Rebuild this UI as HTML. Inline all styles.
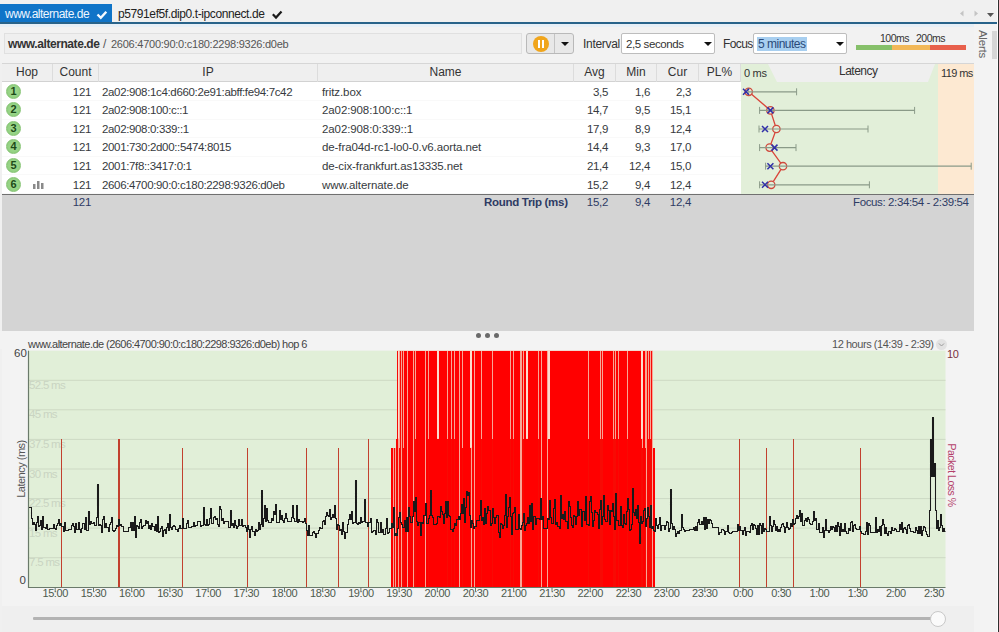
<!DOCTYPE html>
<html><head><meta charset="utf-8">
<style>
*{box-sizing:border-box;margin:0;padding:0}
html,body{width:999px;height:632px;overflow:hidden;background:#f0f0f0;font-family:"Liberation Sans",sans-serif;font-size:11px;color:#333}
.abs{position:absolute}
#tabs{position:absolute;left:0;top:0;width:999px;height:23px;background:#f0f0f0}
#tab1{position:absolute;left:0;top:4px;width:112px;height:19px;background:#0f74c8;color:#fff;font-size:12px;line-height:19px;padding-left:5px;letter-spacing:-0.2px}
#tab2{position:absolute;left:118px;top:4px;height:19px;color:#222;font-size:12px;line-height:19px;letter-spacing:-0.2px}
#bline{position:absolute;left:0;top:22px;width:998px;height:2px;background:#28638a}
#tool{position:absolute;left:0;top:24px;width:974px;height:39px;background:#f2f2f2}
#addr{position:absolute;left:4px;top:33px;width:518px;height:21px;border:1px solid #e0e0e0;background:#efefef;line-height:19px;padding-left:4px;font-size:12px;color:#444;letter-spacing:-0.3px}
#addr b{color:#333}
#pause{position:absolute;left:526px;top:33px;width:48px;height:21px;border:1px solid #b9b9b9;border-radius:3px;background:#e8e8e8}
#pause .div{position:absolute;left:27px;top:0;width:1px;height:19px;background:#c4c4c4}
#pause .circ{position:absolute;left:6px;top:2px;width:16px;height:16px;border-radius:50%;background:#f0a51c}
#pause .circ:before,#pause .circ:after{content:"";position:absolute;top:4px;width:2px;height:8px;background:#fff}
#pause .circ:before{left:5px}#pause .circ:after{left:9px}
.tri{position:absolute;width:0;height:0;border-left:4px solid transparent;border-right:4px solid transparent;border-top:4px solid #111}
.lbl{position:absolute;font-size:12px;color:#333;letter-spacing:-0.2px}
.sel{position:absolute;height:21px;border:1px solid #bdbdbd;border-radius:2px;background:#fff;font-size:12px;line-height:19px;padding-left:3px;color:#333}
#focussel span{background:#a8cff0;color:#2a4a7a;padding:0 1px}
#sidebar{position:absolute;left:974px;top:24px;width:25px;height:608px;background:#f3f3f3}
#alerts{position:absolute;left:969px;top:38px;transform:rotate(90deg);font-size:11.5px;color:#666;transform-origin:center;letter-spacing:-0.2px}
#table{position:absolute;left:2px;top:63px;width:972px;height:268px;background:#d4d4d4}
#thead{position:absolute;left:0;top:0;width:972px;height:19px;background:#efefef;border-top:1px solid #d6d6d6;border-bottom:1px solid #d2d2d2}
.th{position:absolute;top:0;height:18px;line-height:17px;text-align:center;font-size:12px;color:#333;border-right:1px solid #dcdcdc}
#rowsbg{position:absolute;left:0;top:19px;width:739px;height:112px;background:#fff}
.row{position:absolute;left:0;width:739px;height:18.6px;border-bottom:1px solid #f9f9f9}
.hop{position:absolute;left:4px;top:1px;width:15px;height:15px;border-radius:50%;background:radial-gradient(circle,#a2da92 0%,#94d283 60%,#7fc26d 100%);border:1px solid #86c474;font-size:11px;line-height:13px;text-align:center;color:#1c4a18;font-weight:bold}
.bars{position:absolute;left:31px;top:4.5px;fill:#8a8a8a}
.c{position:absolute;top:0;line-height:18.6px;font-size:11.5px;color:#363a40;white-space:nowrap;letter-spacing:-0.35px}
.cnt{left:0;width:89px;text-align:right}
.ip{left:100px}
.nm{left:320px;letter-spacing:-0.1px}
.avg{left:554px;width:52px;text-align:right}
.min{left:600px;width:48px;text-align:right}
.cur{left:640px;width:49px;text-align:right}
#botline{position:absolute;left:0;top:130px;width:972px;height:1.5px;background:#707070}
.rt{position:absolute;top:131px;line-height:16px;font-size:11.5px;color:#2e3b64;letter-spacing:-0.3px}
#divbar{position:absolute;left:0;top:331px;width:974px;height:18px;background:#f3f3f3}
.dot{position:absolute;top:333px;width:5px;height:5px;border-radius:50%;background:#6a6a6a}
#chartp{position:absolute;left:2px;top:338px;width:972px;height:268px;background:#f3f3f3}
#slidep{position:absolute;left:2px;top:606px;width:972px;height:26px;background:#efefef}
.glab{position:absolute;left:29px;font-size:11.5px;color:#c9d4c2;letter-spacing:-0.7px}
.tlab{position:absolute;top:586px;width:60px;text-align:center;font-size:11px;color:#4d5a4d;letter-spacing:-0.4px;line-height:14px}
</style></head><body>
<div id="tabs"></div>
<div id="tab1"></div>
<div class="abs" style="left:5px;top:6px;font-size:12px;line-height:16px;color:#eef6ff;letter-spacing:-0.5px">www.alternate.de</div>
<div class="abs" style="left:118px;top:6px;font-size:12px;line-height:16px;color:#222;letter-spacing:-0.4px">p5791ef5f.dip0.t-ipconnect.de</div>
<svg class="abs" style="left:0;top:0" width="300" height="24"><path d="M97.5,14.5 L100.8,17.8 L106.3,11.8" fill="none" stroke="#f4faff" stroke-width="2.4"/><path d="M272.8,14.3 L276,17.6 L281.5,11.5" fill="none" stroke="#1a1a1a" stroke-width="2.2"/></svg>
<svg class="abs" style="left:955px;top:8px" width="44" height="12"><path d="M5,5.5 L8.5,2.5 L8.5,8.5Z" fill="#c4c4c4"/><path d="M19.5,2.5 L23,5.5 L19.5,8.5Z" fill="#c4c4c4"/><path d="M32,5 L39,5 L35.5,9Z" fill="#555"/></svg>
<div id="bline"></div>
<div id="tool"></div><div class="abs" style="left:0;top:24px;width:997px;height:3px;background:#e6eff7"></div>
<div id="addr"></div>
<div class="abs" style="left:8px;top:36px;font-size:12px;line-height:16px;font-weight:bold;color:#333;letter-spacing:-0.42px">www.alternate.de</div>
<div class="abs" style="left:103px;top:36px;font-size:12px;line-height:16px;color:#555">/</div>
<div class="abs" style="left:111px;top:36px;font-size:11px;line-height:16px;color:#555;letter-spacing:-0.25px">2606:4700:90:0:c180:2298:9326:d0eb</div>
<div id="pause"><div class="circ"></div><div class="div"></div><div class="tri" style="left:34px;top:8px"></div></div>
<div class="lbl" style="left:583px;top:37px;letter-spacing:-0.3px">Interval</div>
<div class="sel" style="left:621px;top:33px;width:94px;padding-left:4px;line-height:21px;font-size:11.5px;letter-spacing:-0.4px">2,5 seconds<div class="tri" style="left:82px;top:8px"></div></div>
<div class="lbl" style="left:723px;top:37px;letter-spacing:-0.6px">Focus</div>
<div class="sel" id="focussel" style="left:753px;top:33px;width:94px;line-height:21px;letter-spacing:-0.5px"><span>5 minutes</span><div class="tri" style="left:82px;top:8px"></div></div>
<div class="lbl" style="left:880px;top:32px;font-size:10.5px;letter-spacing:-0.5px">100ms</div>
<div class="lbl" style="left:916px;top:32px;font-size:10.5px;letter-spacing:-0.5px">200ms</div>
<div class="abs" style="left:856px;top:45px;width:36px;height:5px;background:#86c06a"></div>
<div class="abs" style="left:892px;top:45px;width:38px;height:5px;background:#f2b858"></div>
<div class="abs" style="left:930px;top:45px;width:36px;height:5px;background:#e8604c"></div>
<div id="sidebar"></div>
<div class="abs" style="left:992px;top:31px;width:5px;height:28px;background:#d6d6d6"></div>
<div class="abs" style="left:997px;top:0;width:1px;height:632px;background:#fcfcfc"></div><div class="abs" style="left:998px;top:0;width:1px;height:632px;background:#2e2e2e"></div>
<div id="alerts">Alerts</div>

<div id="table">
 <div id="thead">
  <div class="th" style="left:0;width:51px">Hop</div>
  <div class="th" style="left:51px;width:46px">Count</div>
  <div class="th" style="left:97px;width:219px">IP</div>
  <div class="th" style="left:316px;width:256px">Name</div>
  <div class="th" style="left:572px;width:42px">Avg</div>
  <div class="th" style="left:614px;width:41px">Min</div>
  <div class="th" style="left:655px;width:42px">Cur</div>
  <div class="th" style="left:697px;width:42px">PL%</div>
 </div>
 <div id="rowsbg"></div>
</div>
<div style="position:absolute;left:2px;top:0;">
<div class="row" style="top:82.5px"><div class="hop">1</div><div class="c cnt">121</div><div class="c ip">2a02:908:1c4:d660:2e91:abff:fe94:7c42</div><div class="c nm">fritz.box</div><div class="c avg">3,5</div><div class="c min">1,6</div><div class="c cur">2,3</div></div><div class="row" style="top:101.1px"><div class="hop">2</div><div class="c cnt">121</div><div class="c ip">2a02:908:100:c::1</div><div class="c nm">2a02:908:100:c::1</div><div class="c avg">14,7</div><div class="c min">9,5</div><div class="c cur">15,1</div></div><div class="row" style="top:119.7px"><div class="hop">3</div><div class="c cnt">121</div><div class="c ip">2a02:908:0:339::1</div><div class="c nm">2a02:908:0:339::1</div><div class="c avg">17,9</div><div class="c min">8,9</div><div class="c cur">12,4</div></div><div class="row" style="top:138.3px"><div class="hop">4</div><div class="c cnt">121</div><div class="c ip">2001:730:2d00::5474:8015</div><div class="c nm">de-fra04d-rc1-lo0-0.v6.aorta.net</div><div class="c avg">14,4</div><div class="c min">9,3</div><div class="c cur">17,0</div></div><div class="row" style="top:156.9px"><div class="hop">5</div><div class="c cnt">121</div><div class="c ip">2001:7f8::3417:0:1</div><div class="c nm">de-cix-frankfurt.as13335.net</div><div class="c avg">21,4</div><div class="c min">12,4</div><div class="c cur">15,0</div></div><div class="row" style="top:175.5px"><div class="hop">6</div><svg class="bars" width="12" height="9" viewBox="0 0 12 9"><rect x="0" y="4" width="2.5" height="5"/><rect x="4" y="1" width="2.5" height="8"/><rect x="8" y="3" width="2.5" height="6"/></svg><div class="c cnt">121</div><div class="c ip">2606:4700:90:0:c180:2298:9326:d0eb</div><div class="c nm">www.alternate.de</div><div class="c avg">15,2</div><div class="c min">9,4</div><div class="c cur">12,4</div></div>
</div>
<div class="abs" style="left:741px;top:64px;width:197px;height:130px;background:#e2efd9"></div>
<div class="abs" style="left:938px;top:64px;width:36px;height:130px;background:#fde9d2"></div>
<svg class="abs" style="left:0;top:0" width="999" height="632"><polygon points="768,64 935,64 928,82 777,82" fill="#efefef"/></svg>
<div class="abs" style="left:744px;top:67px;font-size:11px;color:#333;letter-spacing:-0.3px">0 ms</div>
<div class="abs" style="left:839px;top:64px;font-size:12px;color:#333;letter-spacing:-0.5px">Latency</div>
<div class="abs" style="left:941px;top:67px;font-size:11px;color:#333;letter-spacing:-0.6px">119 ms</div>
<svg class="abs" style="left:0;top:0" width="999" height="632"><polyline points="748.7,91.8 770.4,110.4 776.4,129.0 769.6,147.6 783.0,166.2 771.2,184.8" fill="none" stroke="#d9453a" stroke-width="1.3"/><circle cx="748.7" cy="91.8" r="3.7" fill="#e2efd9" stroke="#d0483c" stroke-width="1.3"/><circle cx="770.4" cy="110.4" r="3.7" fill="#e2efd9" stroke="#d0483c" stroke-width="1.3"/><circle cx="776.4" cy="129.0" r="3.7" fill="#e2efd9" stroke="#d0483c" stroke-width="1.3"/><circle cx="769.6" cy="147.6" r="3.7" fill="#e2efd9" stroke="#d0483c" stroke-width="1.3"/><circle cx="783.0" cy="166.2" r="3.7" fill="#e2efd9" stroke="#d0483c" stroke-width="1.3"/><circle cx="771.2" cy="184.8" r="3.7" fill="#e2efd9" stroke="#d0483c" stroke-width="1.3"/><line x1="748.0" y1="91.8" x2="796.6" y2="91.8" stroke="#8a9a88" stroke-width="1.2"/><line x1="748.0" y1="88.3" x2="748.0" y2="95.3" stroke="#8a9a88" stroke-width="1"/><line x1="796.6" y1="88.3" x2="796.6" y2="95.3" stroke="#8a9a88" stroke-width="1"/><line x1="759.6" y1="110.4" x2="914.6" y2="110.4" stroke="#8a9a88" stroke-width="1.2"/><line x1="759.6" y1="106.9" x2="759.6" y2="113.9" stroke="#8a9a88" stroke-width="1"/><line x1="914.6" y1="106.9" x2="914.6" y2="113.9" stroke="#8a9a88" stroke-width="1"/><line x1="759.0" y1="129.0" x2="868.0" y2="129.0" stroke="#8a9a88" stroke-width="1.2"/><line x1="759.0" y1="125.5" x2="759.0" y2="132.5" stroke="#8a9a88" stroke-width="1"/><line x1="868.0" y1="125.5" x2="868.0" y2="132.5" stroke="#8a9a88" stroke-width="1"/><line x1="759.6" y1="147.6" x2="796.0" y2="147.6" stroke="#8a9a88" stroke-width="1.2"/><line x1="759.6" y1="144.1" x2="759.6" y2="151.1" stroke="#8a9a88" stroke-width="1"/><line x1="796.0" y1="144.1" x2="796.0" y2="151.1" stroke="#8a9a88" stroke-width="1"/><line x1="765.6" y1="166.2" x2="971.2" y2="166.2" stroke="#8a9a88" stroke-width="1.2"/><line x1="765.6" y1="162.7" x2="765.6" y2="169.7" stroke="#8a9a88" stroke-width="1"/><line x1="971.2" y1="162.7" x2="971.2" y2="169.7" stroke="#8a9a88" stroke-width="1"/><line x1="759.6" y1="184.8" x2="869.4" y2="184.8" stroke="#8a9a88" stroke-width="1.2"/><line x1="759.6" y1="181.3" x2="759.6" y2="188.3" stroke="#8a9a88" stroke-width="1"/><line x1="869.4" y1="181.3" x2="869.4" y2="188.3" stroke="#8a9a88" stroke-width="1"/><path d="M743.0,88.8 l6,6 m0,-6 l-6,6" stroke="#3030a8" stroke-width="1.5" fill="none"/><path d="M767.4,107.4 l6,6 m0,-6 l-6,6" stroke="#3030a8" stroke-width="1.5" fill="none"/><path d="M762.0,126.0 l6,6 m0,-6 l-6,6" stroke="#3030a8" stroke-width="1.5" fill="none"/><path d="M771.5,144.6 l6,6 m0,-6 l-6,6" stroke="#3030a8" stroke-width="1.5" fill="none"/><path d="M767.4,163.2 l6,6 m0,-6 l-6,6" stroke="#3030a8" stroke-width="1.5" fill="none"/><path d="M762.0,181.8 l6,6 m0,-6 l-6,6" stroke="#3030a8" stroke-width="1.5" fill="none"/></svg>
<div id="botline" style="left:2px;top:193.5px"></div>
<div class="rt" style="left:2px;width:89px;text-align:right;top:194px;color:#2e3b64">121</div>
<div class="rt" style="left:484px;top:194px;font-weight:bold">Round Trip (ms)</div>
<div class="rt" style="left:556px;top:194px;width:52px;text-align:right">15,2</div>
<div class="rt" style="left:602px;top:194px;width:48px;text-align:right">9,4</div>
<div class="rt" style="left:642px;top:194px;width:49px;text-align:right">12,4</div>
<div class="rt" style="left:853px;top:194px;font-size:11.5px;letter-spacing:-0.38px">Focus: 2:34:54 - 2:39:54</div>

<div id="divbar"></div>
<div class="dot" style="left:476px"></div><div class="dot" style="left:485px"></div><div class="dot" style="left:494px"></div>
<div id="chartp"></div>
<div id="slidep"></div>
<div class="abs" style="left:28px;top:338px;font-size:11px;color:#444;letter-spacing:-0.55px">www.alternate.de (2606:4700:90:0:c180:2298:9326:d0eb) hop 6</div>
<div class="abs" style="left:935.5px;top:339px;width:11px;height:11px;border-radius:50%;background:#e2e2e2"><svg width="11" height="11" style="position:absolute;left:0;top:0"><path d="M3,4.5 L5.5,7 L8,4.5" fill="none" stroke="#9a9a9a" stroke-width="1"/></svg></div>
<div class="abs" style="left:832px;top:338px;font-size:11px;color:#555;letter-spacing:-0.45px">12 hours (14:39 - 2:39)</div>
<div class="abs" style="left:14px;top:347px;font-size:11.5px;color:#444">60</div>
<div class="abs" style="left:19.5px;top:574px;font-size:11.5px;color:#444">0</div>
<div class="abs" style="left:947px;top:348px;font-size:11px;color:#7a3040;letter-spacing:-0.3px">10</div>
<div class="abs" style="left:-8px;top:463px;transform:rotate(-90deg);font-size:11px;color:#555;letter-spacing:-0.5px">Latency (ms)</div>
<div class="abs" style="left:921px;top:469px;transform:rotate(90deg);font-size:10.5px;color:#b4406a;letter-spacing:-0.5px">Packet Loss %</div>
<svg class="abs" style="left:0;top:0" width="999" height="632">
 <rect x="28.5" y="350.7" width="917" height="236.6" fill="#e1efd8"/>
 <g stroke="#cdd9c4" stroke-width="1"><line x1="28.5" y1="380.3" x2="945.5" y2="380.3"/><line x1="28.5" y1="409.8" x2="945.5" y2="409.8"/><line x1="28.5" y1="439.4" x2="945.5" y2="439.4"/><line x1="28.5" y1="469.0" x2="945.5" y2="469.0"/><line x1="28.5" y1="498.6" x2="945.5" y2="498.6"/><line x1="28.5" y1="528.1" x2="945.5" y2="528.1"/><line x1="28.5" y1="557.7" x2="945.5" y2="557.7"/></g>
</svg>
<div class="glab" style="top:378.8px">52.5 ms</div><div class="glab" style="top:408.3px">45 ms</div><div class="glab" style="top:437.9px">37.5 ms</div><div class="glab" style="top:467.5px">30 ms</div><div class="glab" style="top:497.1px">22.5 ms</div><div class="glab" style="top:526.6px">15 ms</div><div class="glab" style="top:556.2px">7.5 ms</div>
<svg class="abs" style="left:0;top:0" width="999" height="632">
 <rect x="397" y="350.7" width="256" height="236.6" fill="#f8a595"/><rect x="391" y="448" width="264" height="139.3" fill="#f8a595"/><g fill="#fbdccd"><rect x="437" y="350.7" width="2" height="88"/><rect x="470" y="350.7" width="2" height="97"/><rect x="526" y="350.7" width="2" height="88"/><rect x="548" y="350.7" width="2" height="236"/><rect x="641" y="350.7" width="2" height="88"/><rect x="398" y="350.7" width="1" height="88"/></g>
 <g fill="#ff0000" shape-rendering="crispEdges"><rect x="61" y="438.5" width="1" height="148.8" fill="#c2402e"/><rect x="118" y="438.5" width="2" height="148.8" fill="#c2402e"/><rect x="182" y="448.0" width="1" height="139.3" fill="#c2402e"/><rect x="247" y="448.0" width="1" height="139.3" fill="#c2402e"/><rect x="306" y="448.0" width="1" height="139.3" fill="#c2402e"/><rect x="338" y="448.0" width="1" height="139.3" fill="#c2402e"/><rect x="368" y="438.5" width="1" height="148.8" fill="#c2402e"/><rect x="391" y="448.0" width="2" height="139.3" fill="#ff0000"/><rect x="394" y="448.0" width="1" height="139.3" fill="#f80a04"/><rect x="396" y="438.5" width="1" height="148.8" fill="#f80a04"/><rect x="397" y="350.7" width="1" height="236.6" fill="#f80a04"/><rect x="399" y="448.0" width="1" height="139.3" fill="#f80a04"/><rect x="400" y="350.7" width="1" height="236.6" fill="#f80a04"/><rect x="402" y="350.7" width="1" height="236.6" fill="#f80a04"/><rect x="403" y="448.0" width="1" height="139.3" fill="#f80a04"/><rect x="404" y="350.7" width="3" height="236.6" fill="#ff0000"/><rect x="408" y="350.7" width="5" height="236.6" fill="#ff0000"/><rect x="414" y="350.7" width="1" height="236.6" fill="#f80a04"/><rect x="415" y="438.5" width="1" height="148.8" fill="#f80a04"/><rect x="416" y="350.7" width="9" height="236.6" fill="#ff0000"/><rect x="426" y="350.7" width="2" height="236.6" fill="#ff0000"/><rect x="428" y="438.5" width="1" height="148.8" fill="#f80a04"/><rect x="429" y="350.7" width="8" height="236.6" fill="#ff0000"/><rect x="437" y="438.5" width="2" height="148.8" fill="#ff0000"/><rect x="439" y="350.7" width="8" height="236.6" fill="#ff0000"/><rect x="447" y="438.5" width="1" height="148.8" fill="#f80a04"/><rect x="448" y="350.7" width="3" height="236.6" fill="#ff0000"/><rect x="451" y="438.5" width="1" height="148.8" fill="#f80a04"/><rect x="452" y="350.7" width="2" height="236.6" fill="#ff0000"/><rect x="454" y="438.5" width="1" height="148.8" fill="#f80a04"/><rect x="455" y="350.7" width="4" height="236.6" fill="#ff0000"/><rect x="460" y="350.7" width="2" height="236.6" fill="#ff0000"/><rect x="462" y="448.0" width="1" height="139.3" fill="#f80a04"/><rect x="463" y="350.7" width="7" height="236.6" fill="#ff0000"/><rect x="470" y="448.0" width="1" height="139.3" fill="#f80a04"/><rect x="472" y="350.7" width="2" height="236.6" fill="#ff0000"/><rect x="475" y="350.7" width="6" height="236.6" fill="#ff0000"/><rect x="481" y="438.5" width="1" height="148.8" fill="#f80a04"/><rect x="482" y="350.7" width="10" height="236.6" fill="#ff0000"/><rect x="492" y="438.5" width="1" height="148.8" fill="#f80a04"/><rect x="493" y="350.7" width="17" height="236.6" fill="#ff0000"/><rect x="510" y="438.5" width="1" height="148.8" fill="#f80a04"/><rect x="511" y="350.7" width="2" height="236.6" fill="#ff0000"/><rect x="513" y="438.5" width="1" height="148.8" fill="#f80a04"/><rect x="514" y="350.7" width="6" height="236.6" fill="#ff0000"/><rect x="522" y="350.7" width="1" height="236.6" fill="#f80a04"/><rect x="523" y="438.5" width="1" height="148.8" fill="#f80a04"/><rect x="524" y="350.7" width="2" height="236.6" fill="#ff0000"/><rect x="526" y="438.5" width="2" height="148.8" fill="#ff0000"/><rect x="528" y="350.7" width="10" height="236.6" fill="#ff0000"/><rect x="538" y="438.5" width="1" height="148.8" fill="#f80a04"/><rect x="539" y="350.7" width="2" height="236.6" fill="#ff0000"/><rect x="542" y="350.7" width="5" height="236.6" fill="#ff0000"/><rect x="548" y="438.5" width="2" height="148.8" fill="#ff0000"/><rect x="550" y="350.7" width="38" height="236.6" fill="#ff0000"/><rect x="588" y="438.5" width="1" height="148.8" fill="#f80a04"/><rect x="589" y="350.7" width="11" height="236.6" fill="#ff0000"/><rect x="600" y="438.5" width="1" height="148.8" fill="#f80a04"/><rect x="601" y="350.7" width="1" height="236.6" fill="#f80a04"/><rect x="602" y="438.5" width="1" height="148.8" fill="#f80a04"/><rect x="603" y="350.7" width="10" height="236.6" fill="#ff0000"/><rect x="613" y="438.5" width="1" height="148.8" fill="#f80a04"/><rect x="614" y="350.7" width="1" height="236.6" fill="#f80a04"/><rect x="615" y="438.5" width="1" height="148.8" fill="#f80a04"/><rect x="616" y="350.7" width="2" height="236.6" fill="#ff0000"/><rect x="618" y="438.5" width="1" height="148.8" fill="#f80a04"/><rect x="619" y="350.7" width="8" height="236.6" fill="#ff0000"/><rect x="627" y="438.5" width="1" height="148.8" fill="#f80a04"/><rect x="628" y="350.7" width="13" height="236.6" fill="#ff0000"/><rect x="641" y="438.5" width="1" height="148.8" fill="#f80a04"/><rect x="642" y="448.0" width="1" height="139.3" fill="#f80a04"/><rect x="643" y="350.7" width="2" height="236.6" fill="#ff0000"/><rect x="645" y="448.0" width="1" height="139.3" fill="#f80a04"/><rect x="647" y="350.7" width="1" height="236.6" fill="#f80a04"/><rect x="648" y="438.5" width="1" height="148.8" fill="#f80a04"/><rect x="649" y="350.7" width="1" height="236.6" fill="#f80a04"/><rect x="650" y="438.5" width="1" height="148.8" fill="#f80a04"/><rect x="651" y="350.7" width="1" height="236.6" fill="#f80a04"/><rect x="653" y="448.0" width="2" height="139.3" fill="#ff0000"/><rect x="739" y="438.5" width="1" height="148.8" fill="#c2402e"/><rect x="766" y="448.0" width="1" height="139.3" fill="#c2402e"/><rect x="793" y="438.5" width="1" height="148.8" fill="#c2402e"/><rect x="860" y="448.0" width="1" height="139.3" fill="#c2402e"/></g>
 <path d="M29,507.5 V507.5 H30.5 V507.5 H31.5 V518.5 H32.5 V524.5 H33.5 V522.5 H34.5 V524.5 H35.5 V530.5 H36.5 V522.5 H37.5 V516.5 H38.5 V526.5 H39.5 V525.5 H40.5 V520.5 H41.5 V529.5 H42.5 V516.5 H43.5 V527.5 H44.5 V527.5 H45.5 V528.5 H46.5 V524.5 H47.5 V529.5 H48.5 V529.5 H49.5 V528.5 H50.5 V528.5 H51.5 V528.5 H52.5 V528.5 H53.5 V524.5 H54.5 V528.5 H55.5 V529.5 H56.5 V525.5 H57.5 V523.5 H58.5 V519.5 H59.5 V525.5 H60.5 V523.5 H61.5 V526.5 H62.5 V526.5 H63.5 V531.5 H64.5 V522.5 H65.5 V530.5 H66.5 V530.5 H67.5 V530.5 H68.5 V529.5 H69.5 V529.5 H70.5 V529.5 H71.5 V525.5 H72.5 V523.5 H73.5 V526.5 H74.5 V532.5 H75.5 V523.5 H76.5 V529.5 H77.5 V529.5 H78.5 V522.5 H79.5 V529.5 H80.5 V532.5 H81.5 V528.5 H82.5 V523.5 H83.5 V523.5 H84.5 V529.5 H85.5 V517.5 H86.5 V530.5 H87.5 V530.5 H88.5 V511.5 H89.5 V524.5 H90.5 V521.5 H91.5 V523.5 H92.5 V523.5 H93.5 V522.5 H94.5 V525.5 H95.5 V525.5 H96.5 V517.5 H97.5 V484.5 H98.5 V525.5 H99.5 V524.5 H100.5 V525.5 H101.5 V532.5 H102.5 V519.5 H103.5 V516.5 H104.5 V527.5 H105.5 V523.5 H106.5 V527.5 H107.5 V527.5 H108.5 V531.5 H109.5 V524.5 H110.5 V522.5 H111.5 V517.5 H112.5 V530.5 H113.5 V531.5 H114.5 V530.5 H115.5 V528.5 H116.5 V525.5 H117.5 V526.5 H118.5 V519.5 H119.5 V525.5 H120.5 V524.5 H121.5 V526.5 H122.5 V526.5 H123.5 V531.5 H124.5 V531.5 H125.5 V531.5 H126.5 V531.5 H127.5 V531.5 H128.5 V527.5 H129.5 V527.5 H130.5 V522.5 H131.5 V530.5 H132.5 V522.5 H133.5 V530.5 H134.5 V516.5 H135.5 V537.5 H136.5 V525.5 H137.5 V526.5 H138.5 V528.5 H139.5 V522.5 H140.5 V519.5 H141.5 V528.5 H142.5 V526.5 H143.5 V525.5 H144.5 V525.5 H145.5 V520.5 H146.5 V523.5 H147.5 V521.5 H148.5 V528.5 H149.5 V525.5 H150.5 V529.5 H151.5 V523.5 H152.5 V526.5 H153.5 V526.5 H154.5 V530.5 H155.5 V524.5 H156.5 V531.5 H157.5 V516.5 H158.5 V532.5 H159.5 V531.5 H160.5 V528.5 H161.5 V526.5 H162.5 V536.5 H163.5 V530.5 H164.5 V529.5 H165.5 V533.5 H166.5 V527.5 H167.5 V523.5 H168.5 V530.5 H169.5 V514.5 H170.5 V527.5 H171.5 V529.5 H172.5 V526.5 H173.5 V525.5 H174.5 V526.5 H175.5 V529.5 H176.5 V529.5 H177.5 V531.5 H178.5 V528.5 H179.5 V525.5 H180.5 V528.5 H181.5 V528.5 H182.5 V518.5 H183.5 V528.5 H184.5 V528.5 H185.5 V528.5 H186.5 V523.5 H187.5 V520.5 H188.5 V527.5 H189.5 V527.5 H190.5 V527.5 H191.5 V526.5 H192.5 V526.5 H193.5 V522.5 H194.5 V526.5 H195.5 V525.5 H196.5 V525.5 H197.5 V521.5 H198.5 V521.5 H199.5 V521.5 H200.5 V526.5 H201.5 V525.5 H202.5 V525.5 H203.5 V507.5 H204.5 V524.5 H205.5 V525.5 H206.5 V519.5 H207.5 V525.5 H208.5 V524.5 H209.5 V518.5 H210.5 V508.5 H211.5 V523.5 H212.5 V523.5 H213.5 V517.5 H214.5 V516.5 H215.5 V519.5 H216.5 V518.5 H217.5 V524.5 H218.5 V526.5 H219.5 V506.5 H220.5 V509.5 H221.5 V520.5 H222.5 V518.5 H223.5 V523.5 H224.5 V521.5 H225.5 V521.5 H226.5 V521.5 H227.5 V521.5 H228.5 V527.5 H229.5 V527.5 H230.5 V510.5 H231.5 V525.5 H232.5 V523.5 H233.5 V527.5 H234.5 V520.5 H235.5 V525.5 H236.5 V528.5 H237.5 V526.5 H238.5 V519.5 H239.5 V525.5 H240.5 V525.5 H241.5 V519.5 H242.5 V526.5 H243.5 V525.5 H244.5 V525.5 H245.5 V527.5 H246.5 V531.5 H247.5 V525.5 H248.5 V529.5 H249.5 V537.5 H250.5 V529.5 H251.5 V526.5 H252.5 V531.5 H253.5 V531.5 H254.5 V535.5 H255.5 V529.5 H256.5 V531.5 H257.5 V530.5 H258.5 V522.5 H259.5 V529.5 H260.5 V524.5 H261.5 V490.5 H262.5 V526.5 H263.5 V518.5 H264.5 V505.5 H265.5 V521.5 H266.5 V508.5 H267.5 V520.5 H268.5 V522.5 H269.5 V522.5 H270.5 V522.5 H271.5 V518.5 H272.5 V520.5 H273.5 V511.5 H274.5 V514.5 H275.5 V504.5 H276.5 V522.5 H277.5 V522.5 H278.5 V522.5 H279.5 V510.5 H280.5 V519.5 H281.5 V515.5 H282.5 V520.5 H283.5 V522.5 H284.5 V518.5 H285.5 V513.5 H286.5 V518.5 H287.5 V521.5 H288.5 V521.5 H289.5 V521.5 H290.5 V521.5 H291.5 V517.5 H292.5 V505.5 H293.5 V518.5 H294.5 V521.5 H295.5 V521.5 H296.5 V505.5 H297.5 V522.5 H298.5 V519.5 H299.5 V521.5 H300.5 V521.5 H301.5 V521.5 H302.5 V522.5 H303.5 V521.5 H304.5 V518.5 H305.5 V523.5 H306.5 V530.5 H307.5 V535.5 H308.5 V525.5 H309.5 V535.5 H310.5 V535.5 H311.5 V535.5 H312.5 V532.5 H313.5 V531.5 H314.5 V533.5 H315.5 V537.5 H316.5 V533.5 H317.5 V533.5 H318.5 V530.5 H319.5 V527.5 H320.5 V528.5 H321.5 V528.5 H322.5 V521.5 H323.5 V520.5 H324.5 V524.5 H325.5 V516.5 H326.5 V512.5 H327.5 V515.5 H328.5 V516.5 H329.5 V509.5 H330.5 V519.5 H331.5 V517.5 H332.5 V514.5 H333.5 V517.5 H334.5 V505.5 H335.5 V518.5 H336.5 V529.5 H337.5 V524.5 H338.5 V525.5 H339.5 V530.5 H340.5 V529.5 H341.5 V534.5 H342.5 V522.5 H343.5 V531.5 H344.5 V538.5 H345.5 V532.5 H346.5 V532.5 H347.5 V524.5 H348.5 V519.5 H349.5 V514.5 H350.5 V519.5 H351.5 V511.5 H352.5 V523.5 H353.5 V522.5 H354.5 V522.5 H355.5 V480.5 H356.5 V523.5 H357.5 V524.5 H358.5 V522.5 H359.5 V523.5 H360.5 V517.5 H361.5 V522.5 H362.5 V521.5 H363.5 V521.5 H364.5 V499.5 H365.5 V522.5 H366.5 V522.5 H367.5 V526.5 H368.5 V522.5 H369.5 V522.5 H370.5 V518.5 H371.5 V532.5 H372.5 V531.5 H373.5 V530.5 H374.5 V530.5 H375.5 V534.5 H376.5 V519.5 H377.5 V522.5 H378.5 V532.5 H379.5 V532.5 H380.5 V522.5 H381.5 V532.5 H382.5 V529.5 H383.5 V534.5 H384.5 V534.5 H385.5 V528.5 H386.5 V518.5 H387.5 V533.5 H388.5 V532.5 H389.5 V528.5 H390.5 V528.5 H391.5 V523.5 H392.5 V527.5 H393.5 V507.5 H394.5 V535.5 H395.5 V533.5 H396.5 V535.5 H397.5 V528.5 H398.5 V517.5 H399.5 V512.5 H400.5 V522.5 H401.5 V524.5 H402.5 V527.5 H403.5 V527.5 H404.5 V520.5 H405.5 V531.5 H406.5 V517.5 H407.5 V531.5 H408.5 V507.5 H409.5 V516.5 H410.5 V522.5 H411.5 V522.5 H412.5 V516.5 H413.5 V501.5 H414.5 V511.5 H415.5 V497.5 H416.5 V521.5 H417.5 V525.5 H418.5 V522.5 H419.5 V522.5 H420.5 V535.5 H421.5 V522.5 H422.5 V523.5 H423.5 V515.5 H424.5 V515.5 H425.5 V503.5 H426.5 V523.5 H427.5 V523.5 H428.5 V518.5 H429.5 V515.5 H430.5 V490.5 H431.5 V515.5 H432.5 V517.5 H433.5 V524.5 H434.5 V524.5 H435.5 V524.5 H436.5 V523.5 H437.5 V516.5 H438.5 V516.5 H439.5 V517.5 H440.5 V506.5 H441.5 V511.5 H442.5 V514.5 H443.5 V523.5 H444.5 V513.5 H445.5 V501.5 H446.5 V517.5 H447.5 V501.5 H448.5 V515.5 H449.5 V516.5 H450.5 V529.5 H451.5 V529.5 H452.5 V531.5 H453.5 V528.5 H454.5 V523.5 H455.5 V525.5 H456.5 V519.5 H457.5 V519.5 H458.5 V516.5 H459.5 V519.5 H460.5 V513.5 H461.5 V504.5 H462.5 V513.5 H463.5 V498.5 H464.5 V522.5 H465.5 V507.5 H466.5 V491.5 H467.5 V495.5 H468.5 V492.5 H469.5 V515.5 H470.5 V527.5 H471.5 V520.5 H472.5 V523.5 H473.5 V528.5 H474.5 V526.5 H475.5 V526.5 H476.5 V520.5 H477.5 V520.5 H478.5 V520.5 H479.5 V515.5 H480.5 V500.5 H481.5 V520.5 H482.5 V517.5 H483.5 V524.5 H484.5 V508.5 H485.5 V523.5 H486.5 V513.5 H487.5 V506.5 H488.5 V510.5 H489.5 V510.5 H490.5 V525.5 H491.5 V523.5 H492.5 V508.5 H493.5 V517.5 H494.5 V523.5 H495.5 V517.5 H496.5 V515.5 H497.5 V515.5 H498.5 V532.5 H499.5 V537.5 H500.5 V523.5 H501.5 V524.5 H502.5 V528.5 H503.5 V525.5 H504.5 V515.5 H505.5 V494.5 H506.5 V527.5 H507.5 V516.5 H508.5 V507.5 H509.5 V497.5 H510.5 V516.5 H511.5 V534.5 H512.5 V513.5 H513.5 V512.5 H514.5 V507.5 H515.5 V529.5 H516.5 V529.5 H517.5 V529.5 H518.5 V514.5 H519.5 V528.5 H520.5 V529.5 H521.5 V525.5 H522.5 V522.5 H523.5 V513.5 H524.5 V530.5 H525.5 V525.5 H526.5 V523.5 H527.5 V517.5 H528.5 V523.5 H529.5 V505.5 H530.5 V521.5 H531.5 V503.5 H532.5 V529.5 H533.5 V516.5 H534.5 V516.5 H535.5 V524.5 H536.5 V518.5 H537.5 V518.5 H538.5 V518.5 H539.5 V519.5 H540.5 V498.5 H541.5 V519.5 H542.5 V516.5 H543.5 V528.5 H544.5 V528.5 H545.5 V528.5 H546.5 V528.5 H547.5 V518.5 H548.5 V519.5 H549.5 V500.5 H550.5 V517.5 H551.5 V523.5 H552.5 V523.5 H553.5 V508.5 H554.5 V499.5 H555.5 V524.5 H556.5 V522.5 H557.5 V526.5 H558.5 V526.5 H559.5 V528.5 H560.5 V495.5 H561.5 V518.5 H562.5 V514.5 H563.5 V519.5 H564.5 V511.5 H565.5 V521.5 H566.5 V521.5 H567.5 V528.5 H568.5 V501.5 H569.5 V506.5 H570.5 V517.5 H571.5 V525.5 H572.5 V527.5 H573.5 V515.5 H574.5 V516.5 H575.5 V524.5 H576.5 V516.5 H577.5 V501.5 H578.5 V515.5 H579.5 V509.5 H580.5 V509.5 H581.5 V526.5 H582.5 V511.5 H583.5 V511.5 H584.5 V520.5 H585.5 V496.5 H586.5 V524.5 H587.5 V524.5 H588.5 V525.5 H589.5 V501.5 H590.5 V496.5 H591.5 V512.5 H592.5 V526.5 H593.5 V520.5 H594.5 V510.5 H595.5 V512.5 H596.5 V512.5 H597.5 V514.5 H598.5 V528.5 H599.5 V509.5 H600.5 V500.5 H601.5 V524.5 H602.5 V516.5 H603.5 V495.5 H604.5 V519.5 H605.5 V521.5 H606.5 V521.5 H607.5 V505.5 H608.5 V510.5 H609.5 V524.5 H610.5 V510.5 H611.5 V511.5 H612.5 V503.5 H613.5 V516.5 H614.5 V529.5 H615.5 V493.5 H616.5 V520.5 H617.5 V520.5 H618.5 V525.5 H619.5 V525.5 H620.5 V506.5 H621.5 V525.5 H622.5 V527.5 H623.5 V514.5 H624.5 V523.5 H625.5 V524.5 H626.5 V511.5 H627.5 V498.5 H628.5 V509.5 H629.5 V530.5 H630.5 V529.5 H631.5 V524.5 H632.5 V488.5 H633.5 V512.5 H634.5 V515.5 H635.5 V509.5 H636.5 V518.5 H637.5 V505.5 H638.5 V522.5 H639.5 V543.5 H640.5 V516.5 H641.5 V523.5 H642.5 V521.5 H643.5 V510.5 H644.5 V508.5 H645.5 V526.5 H646.5 V518.5 H647.5 V507.5 H648.5 V516.5 H649.5 V527.5 H650.5 V505.5 H651.5 V528.5 H652.5 V526.5 H653.5 V530.5 H654.5 V531.5 H655.5 V518.5 H656.5 V525.5 H657.5 V528.5 H658.5 V524.5 H659.5 V517.5 H660.5 V530.5 H661.5 V525.5 H662.5 V525.5 H663.5 V525.5 H664.5 V529.5 H665.5 V525.5 H666.5 V521.5 H667.5 V522.5 H668.5 V531.5 H669.5 V528.5 H670.5 V489.5 H671.5 V523.5 H672.5 V529.5 H673.5 V526.5 H674.5 V529.5 H675.5 V536.5 H676.5 V533.5 H677.5 V531.5 H678.5 V533.5 H679.5 V530.5 H680.5 V530.5 H681.5 V514.5 H682.5 V527.5 H683.5 V529.5 H684.5 V531.5 H685.5 V530.5 H686.5 V530.5 H687.5 V530.5 H688.5 V530.5 H689.5 V529.5 H690.5 V529.5 H691.5 V529.5 H692.5 V529.5 H693.5 V527.5 H694.5 V530.5 H695.5 V526.5 H696.5 V530.5 H697.5 V522.5 H698.5 V519.5 H699.5 V524.5 H700.5 V524.5 H701.5 V521.5 H702.5 V524.5 H703.5 V517.5 H704.5 V529.5 H705.5 V517.5 H706.5 V528.5 H707.5 V519.5 H708.5 V523.5 H709.5 V519.5 H710.5 V520.5 H711.5 V523.5 H712.5 V527.5 H713.5 V527.5 H714.5 V527.5 H715.5 V527.5 H716.5 V527.5 H717.5 V527.5 H718.5 V534.5 H719.5 V532.5 H720.5 V532.5 H721.5 V529.5 H722.5 V529.5 H723.5 V530.5 H724.5 V534.5 H725.5 V531.5 H726.5 V531.5 H727.5 V525.5 H728.5 V532.5 H729.5 V533.5 H730.5 V533.5 H731.5 V532.5 H732.5 V531.5 H733.5 V531.5 H734.5 V531.5 H735.5 V531.5 H736.5 V531.5 H737.5 V524.5 H738.5 V530.5 H739.5 V526.5 H740.5 V530.5 H741.5 V530.5 H742.5 V534.5 H743.5 V530.5 H744.5 V527.5 H745.5 V535.5 H746.5 V531.5 H747.5 V531.5 H748.5 V531.5 H749.5 V532.5 H750.5 V525.5 H751.5 V523.5 H752.5 V529.5 H753.5 V524.5 H754.5 V525.5 H755.5 V528.5 H756.5 V534.5 H757.5 V525.5 H758.5 V534.5 H759.5 V523.5 H760.5 V525.5 H761.5 V533.5 H762.5 V523.5 H763.5 V531.5 H764.5 V528.5 H765.5 V529.5 H766.5 V531.5 H767.5 V531.5 H768.5 V531.5 H769.5 V516.5 H770.5 V525.5 H771.5 V531.5 H772.5 V526.5 H773.5 V520.5 H774.5 V524.5 H775.5 V530.5 H776.5 V526.5 H777.5 V531.5 H778.5 V529.5 H779.5 V531.5 H780.5 V527.5 H781.5 V524.5 H782.5 V523.5 H783.5 V526.5 H784.5 V532.5 H785.5 V527.5 H786.5 V522.5 H787.5 V527.5 H788.5 V529.5 H789.5 V528.5 H790.5 V523.5 H791.5 V526.5 H792.5 V519.5 H793.5 V524.5 H794.5 V523.5 H795.5 V518.5 H796.5 V515.5 H797.5 V518.5 H798.5 V516.5 H799.5 V510.5 H800.5 V521.5 H801.5 V513.5 H802.5 V525.5 H803.5 V525.5 H804.5 V520.5 H805.5 V518.5 H806.5 V521.5 H807.5 V517.5 H808.5 V519.5 H809.5 V523.5 H810.5 V524.5 H811.5 V524.5 H812.5 V521.5 H813.5 V511.5 H814.5 V520.5 H815.5 V518.5 H816.5 V529.5 H817.5 V529.5 H818.5 V523.5 H819.5 V532.5 H820.5 V532.5 H821.5 V532.5 H822.5 V527.5 H823.5 V537.5 H824.5 V530.5 H825.5 V519.5 H826.5 V530.5 H827.5 V530.5 H828.5 V532.5 H829.5 V530.5 H830.5 V526.5 H831.5 V529.5 H832.5 V526.5 H833.5 V527.5 H834.5 V531.5 H835.5 V525.5 H836.5 V531.5 H837.5 V522.5 H838.5 V526.5 H839.5 V535.5 H840.5 V523.5 H841.5 V531.5 H842.5 V529.5 H843.5 V531.5 H844.5 V523.5 H845.5 V531.5 H846.5 V533.5 H847.5 V533.5 H848.5 V528.5 H849.5 V530.5 H850.5 V522.5 H851.5 V521.5 H852.5 V531.5 H853.5 V525.5 H854.5 V524.5 H855.5 V528.5 H856.5 V529.5 H857.5 V529.5 H858.5 V529.5 H859.5 V526.5 H860.5 V531.5 H861.5 V533.5 H862.5 V533.5 H863.5 V534.5 H864.5 V534.5 H865.5 V531.5 H866.5 V522.5 H867.5 V534.5 H868.5 V523.5 H869.5 V525.5 H870.5 V532.5 H871.5 V532.5 H872.5 V532.5 H873.5 V532.5 H874.5 V532.5 H875.5 V517.5 H876.5 V532.5 H877.5 V529.5 H878.5 V531.5 H879.5 V526.5 H880.5 V535.5 H881.5 V525.5 H882.5 V519.5 H883.5 V524.5 H884.5 V533.5 H885.5 V527.5 H886.5 V533.5 H887.5 V535.5 H888.5 V531.5 H889.5 V531.5 H890.5 V533.5 H891.5 V527.5 H892.5 V530.5 H893.5 V530.5 H894.5 V528.5 H895.5 V529.5 H896.5 V531.5 H897.5 V531.5 H898.5 V531.5 H899.5 V524.5 H900.5 V529.5 H901.5 V522.5 H902.5 V532.5 H903.5 V528.5 H904.5 V527.5 H905.5 V529.5 H906.5 V533.5 H907.5 V525.5 H908.5 V524.5 H909.5 V528.5 H910.5 V531.5 H911.5 V531.5 H912.5 V531.5 H913.5 V532.5 H914.5 V532.5 H915.5 V527.5 H916.5 V530.5 H917.5 V533.5 H918.5 V526.5 H919.5 V533.5 H920.5 V526.5 H921.5 V535.5 H922.5 V530.5 H923.5 V526.5 H924.5 V527.5 H925.5 V531.5 H926.5 V534.5 H927.5 V536.5 H928.5 V536.5 H929.5 V510.5 H930.5 V439.5 H931.5 V476.5 H932.5 V417.5 H933.5 V476.5 H934.5 V463.5 H935.5 V510.5 H936.5 V528.5 H937.5 V520.5 H938.5 V530.5 H939.5 V527.5 H940.5 V514.5 H941.5 V525.5 H942.5 V531.5 H943.5 V528.5 H944.5 V531.5 H945.5" fill="none" stroke="#1a1a1a" stroke-width="1.05"/>
 <line x1="28.5" y1="350.7" x2="28.5" y2="587.8" stroke="#6a7a6a" stroke-width="1.2"/>
 <line x1="28" y1="587.5" x2="945.5" y2="587.5" stroke="#6a7a6a" stroke-width="1.2"/>
 <g stroke="#6a7a6a" stroke-width="1"><line x1="55.2" y1="587.3" x2="55.2" y2="591.3"/><line x1="93.5" y1="587.3" x2="93.5" y2="591.3"/><line x1="131.7" y1="587.3" x2="131.7" y2="591.3"/><line x1="169.9" y1="587.3" x2="169.9" y2="591.3"/><line x1="208.1" y1="587.3" x2="208.1" y2="591.3"/><line x1="246.3" y1="587.3" x2="246.3" y2="591.3"/><line x1="284.5" y1="587.3" x2="284.5" y2="591.3"/><line x1="322.7" y1="587.3" x2="322.7" y2="591.3"/><line x1="360.9" y1="587.3" x2="360.9" y2="591.3"/><line x1="399.1" y1="587.3" x2="399.1" y2="591.3"/><line x1="437.3" y1="587.3" x2="437.3" y2="591.3"/><line x1="475.5" y1="587.3" x2="475.5" y2="591.3"/><line x1="513.7" y1="587.3" x2="513.7" y2="591.3"/><line x1="552.0" y1="587.3" x2="552.0" y2="591.3"/><line x1="590.2" y1="587.3" x2="590.2" y2="591.3"/><line x1="628.4" y1="587.3" x2="628.4" y2="591.3"/><line x1="666.6" y1="587.3" x2="666.6" y2="591.3"/><line x1="704.8" y1="587.3" x2="704.8" y2="591.3"/><line x1="743.0" y1="587.3" x2="743.0" y2="591.3"/><line x1="781.2" y1="587.3" x2="781.2" y2="591.3"/><line x1="819.4" y1="587.3" x2="819.4" y2="591.3"/><line x1="857.6" y1="587.3" x2="857.6" y2="591.3"/><line x1="895.8" y1="587.3" x2="895.8" y2="591.3"/><line x1="934.0" y1="587.3" x2="934.0" y2="591.3"/></g>
</svg>
<div class="tlab" style="left:25.2px">15:00</div><div class="tlab" style="left:63.5px">15:30</div><div class="tlab" style="left:101.7px">16:00</div><div class="tlab" style="left:139.9px">16:30</div><div class="tlab" style="left:178.1px">17:00</div><div class="tlab" style="left:216.3px">17:30</div><div class="tlab" style="left:254.5px">18:00</div><div class="tlab" style="left:292.7px">18:30</div><div class="tlab" style="left:330.9px">19:00</div><div class="tlab" style="left:369.1px">19:30</div><div class="tlab" style="left:407.3px">20:00</div><div class="tlab" style="left:445.5px">20:30</div><div class="tlab" style="left:483.7px">21:00</div><div class="tlab" style="left:522.0px">21:30</div><div class="tlab" style="left:560.2px">22:00</div><div class="tlab" style="left:598.4px">22:30</div><div class="tlab" style="left:636.6px">23:00</div><div class="tlab" style="left:674.8px">23:30</div><div class="tlab" style="left:713.0px">0:00</div><div class="tlab" style="left:751.2px">0:30</div><div class="tlab" style="left:789.4px">1:00</div><div class="tlab" style="left:827.6px">1:30</div><div class="tlab" style="left:865.8px">2:00</div><div class="tlab" style="left:904.0px">2:30</div>
<div class="abs" style="left:33px;top:617px;width:905px;height:3px;background:#b3b3b3;border-radius:1px"></div>
<div class="abs" style="left:930px;top:611px;width:16px;height:16px;border-radius:50%;background:#fafafa;border:1px solid #c8c8c8"></div>
</body></html>
